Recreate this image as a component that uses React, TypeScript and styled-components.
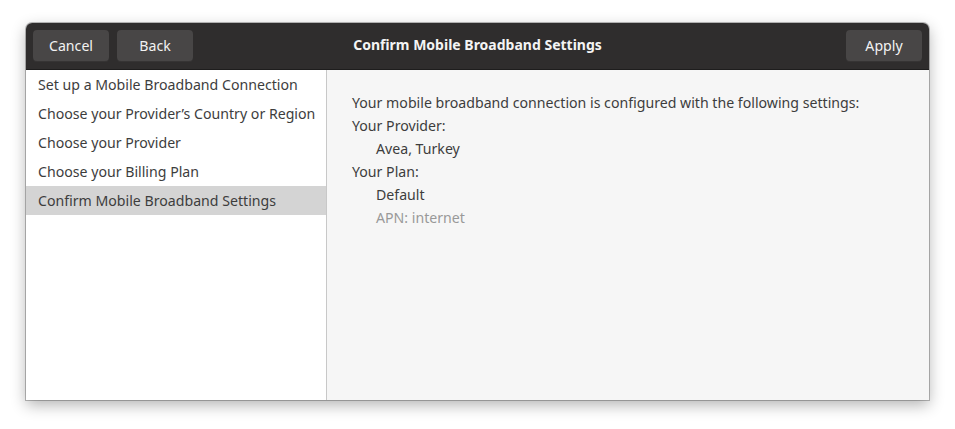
import { FC } from 'react'
import styled, { createGlobalStyle } from 'styled-components'

const GlobalStyle = createGlobalStyle`
	html, body {
		margin: 0;
		padding: 0;
		background: #ffffff;
	}
	body {
		font-family: 'Noto Sans', 'DejaVu Sans', sans-serif;
		-webkit-font-smoothing: antialiased;
	}
`

const Page = styled.div`
	display: flex;
	justify-content: center;
	padding: 23px 26px 29px;
	height: 429px;
	box-sizing: border-box;
`

const Window = styled.div`
	width: 903px;
	height: 377px;
	display: flex;
	flex-direction: column;
	border-radius: 6px 6px 0 0;
	overflow: hidden;
	box-shadow: 0 0 0 1px rgba(0, 0, 0, 0.25), 0 5px 15px rgba(0, 0, 0, 0.3);
`

const HeaderBar = styled.div`
	height: 46px;
	flex: none;
	display: grid;
	grid-template-columns: 1fr auto 1fr;
	align-items: center;
	padding: 0 7px;
	background: #2f2d2d;
	border-bottom: 1px solid #1e1d1d;
`

const ButtonGroup = styled.div<{ $end?: boolean }>`
	display: flex;
	gap: 8px;
	justify-content: ${({ $end }) => ($end ? 'flex-end' : 'flex-start')};
`

const HeaderButton = styled.button`
	width: 76px;
	height: 32px;
	border: none;
	border-radius: 4px;
	background: #484646;
	color: #f2f2f2;
	font-family: inherit;
	font-size: 14.15px;
	padding: 0 0 1px;
	box-shadow: inset 0 -1px 0 rgba(0, 0, 0, 0.25);
`

const Title = styled.div`
	color: #f4f4f4;
	font-weight: bold;
	font-size: 14px;
	padding-bottom: 3px;
`

const Body = styled.div`
	flex: 1;
	display: flex;
	min-height: 0;
`

const Sidebar = styled.ul`
	width: 300px;
	flex: none;
	margin: 0;
	padding: 0;
	list-style: none;
	background: #ffffff;
	border-right: 1px solid #c8c8c8;
`

const Step = styled.li<{ $active?: boolean }>`
	height: 29px;
	display: flex;
	align-items: center;
	padding-left: 12px;
	font-size: 14.15px;
	color: #3d3d3d;
	background: ${({ $active }) => ($active ? '#d4d4d4' : 'transparent')};
`

const Content = styled.div`
	flex: 1;
	background: #f6f6f6;
	padding: 21px 25px;
`

const Line = styled.div<{ $indent?: boolean; $muted?: boolean }>`
	height: 23px;
	line-height: 23px;
	font-size: 14.15px;
	padding-left: ${({ $indent }) => ($indent ? '24px' : '0')};
	color: ${({ $muted }) => ($muted ? '#999999' : '#3d3d3d')};
`

const steps = [
	'Set up a Mobile Broadband Connection',
	'Choose your Provider\u2019s Country or Region',
	'Choose your Provider',
	'Choose your Billing Plan',
	'Confirm Mobile Broadband Settings',
]

const App: FC = () => (
	<>
		<GlobalStyle />
		<Page>
			<Window>
				<HeaderBar>
					<ButtonGroup>
						<HeaderButton>Cancel</HeaderButton>
						<HeaderButton>Back</HeaderButton>
					</ButtonGroup>
					<Title>Confirm Mobile Broadband Settings</Title>
					<ButtonGroup $end>
						<HeaderButton>Apply</HeaderButton>
					</ButtonGroup>
				</HeaderBar>
				<Body>
					<Sidebar>
						{steps.map((s, i) => (
							<Step key={s} $active={i === steps.length - 1}>
								{s}
							</Step>
						))}
					</Sidebar>
					<Content>
						<Line>Your mobile broadband connection is configured with the following settings:</Line>
						<Line>Your Provider:</Line>
						<Line $indent>Avea, Turkey</Line>
						<Line>Your Plan:</Line>
						<Line $indent>Default</Line>
						<Line $indent $muted>APN: internet</Line>
					</Content>
				</Body>
			</Window>
		</Page>
	</>
)

export default App
